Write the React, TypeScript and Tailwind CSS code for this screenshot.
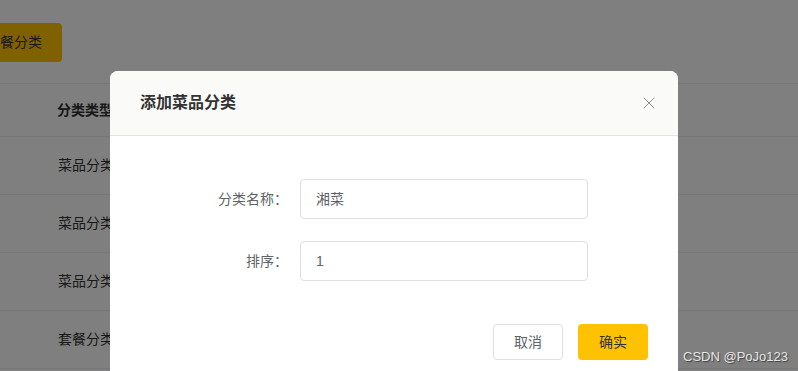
import { X } from 'lucide-react';

const FONT = 'font-["Liberation_Sans","Noto_Sans_CJK_SC",sans-serif]';

const rows = ['菜品分类', '菜品分类', '菜品分类', '套餐分类'];

function BackgroundPage() {
  return (
    <div className="h-[371px] w-[798px] overflow-hidden bg-white">
      {/* toolbar */}
      <div className="flex h-[83px] items-start pt-[23px]">
        <button className="-ml-[62px] h-[39px] rounded-[4px] bg-[#ffc200] px-[20px] text-[14px] text-[#333]">
          新增套餐分类
        </button>
      </div>
      {/* table */}
      <div className="border-t border-[#ebeef5]">
        <div className="flex h-[53px] items-center border-b border-[#ebeef5] pl-[57px] text-[14px] font-bold text-[#333]">
          分类类型
        </div>
        {rows.map((r, i) => (
          <div
            key={i}
            className="flex h-[58px] items-center border-b border-[#ebeef5] pl-[58px] text-[14px] text-[#333]"
          >
            {r}
          </div>
        ))}
      </div>
    </div>
  );
}

function Field({ label, value }: { label: string; value: string }) {
  return (
    <div className="flex items-center">
      <label className="w-[190px] pr-[12px] text-right text-[14px] text-[#606266]">{label}</label>
      <div className="flex h-[40px] w-[288px] items-center rounded-[4px] border border-[#dcdfe6] px-[15px] text-[14px] text-[#606266]">
        {value}
      </div>
    </div>
  );
}

export default function App() {
  return (
    <div className={`relative h-[371px] w-[798px] overflow-hidden ${FONT}`}>
      <BackgroundPage />
      {/* modal mask */}
      <div className="absolute inset-0 bg-black/50" />
      {/* dialog */}
      <div className="absolute left-[110px] top-[71px] w-[568px] overflow-hidden rounded-t-[8px] bg-white">
        <div className="flex h-[65px] items-center justify-between border-b border-[#e4e4e4] bg-[#fafaf8] pl-[30px] pr-[19px]">
          <span className="text-[16px] font-bold text-[#333]">添加菜品分类</span>
          <X className="h-[20px] w-[20px] text-[#909399]" strokeWidth={1.2} />
        </div>
        <div className="flex flex-col gap-[22px] pt-[43px]">
          <Field label="分类名称：" value="湘菜" />
          <Field label="排序：" value="1" />
        </div>
        <div className="flex justify-end gap-[15px] pb-[40px] pr-[30px] pt-[43px]">
          <button className="h-[36px] w-[70px] rounded-[4px] border border-[#dcdfe6] bg-white text-[14px] text-[#606266]">
            取消
          </button>
          <button className="h-[36px] w-[70px] rounded-[4px] bg-[#ffc200] text-[14px] text-[#333]">
            确实
          </button>
        </div>
      </div>
      {/* watermark */}
      <div className="absolute left-[683px] top-[347px] text-[13px] text-[#e6e6e6] [text-shadow:1px_1px_1px_rgba(0,0,0,0.5)]">
        CSDN @PoJo123
      </div>
    </div>
  );
}
